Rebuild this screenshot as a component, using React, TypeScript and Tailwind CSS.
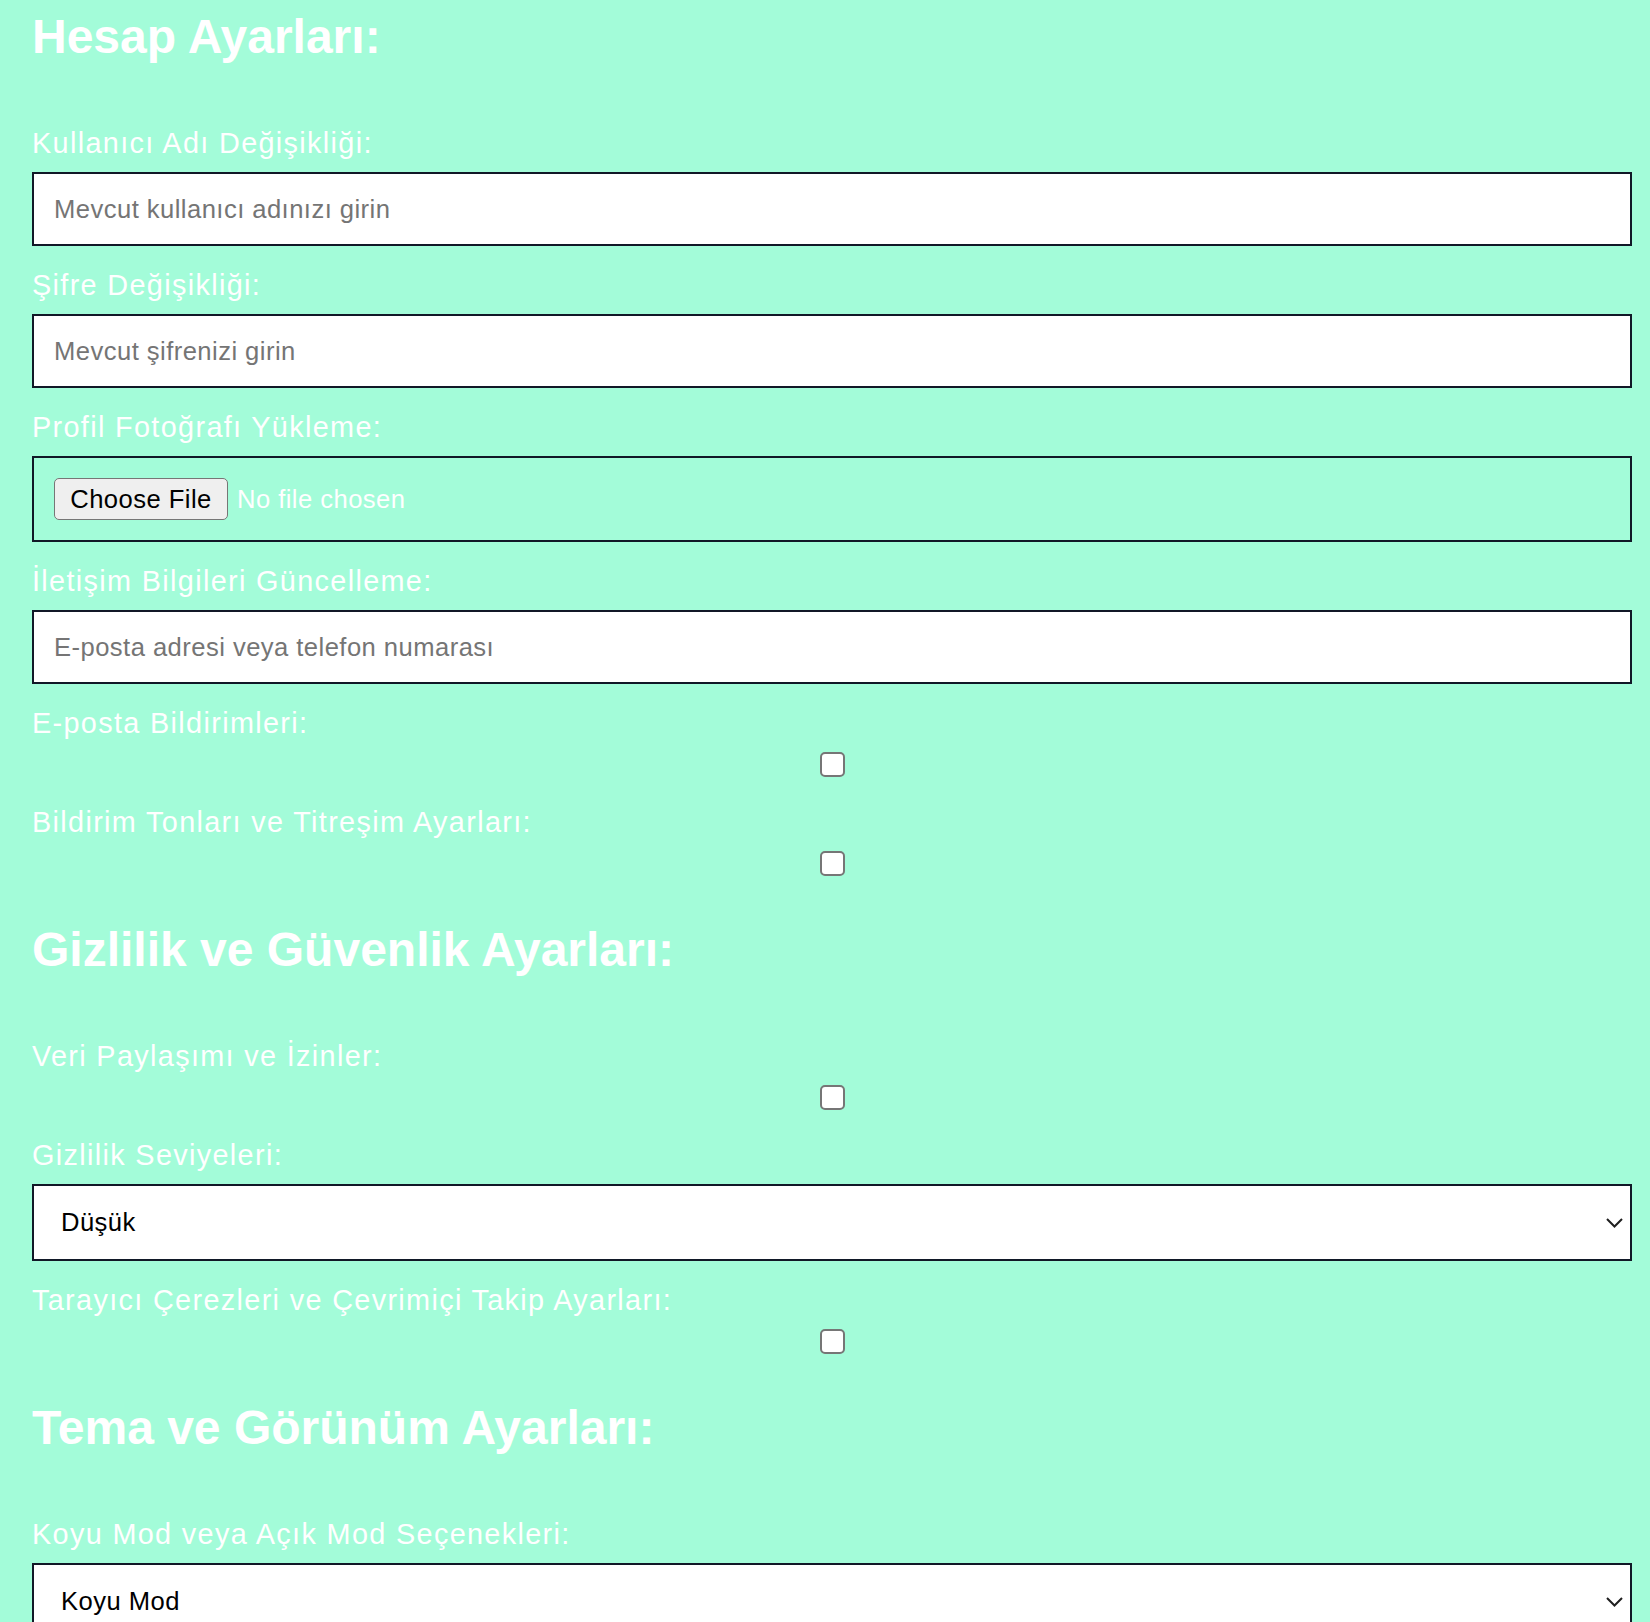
import React from "react";

function Heading({ children, first }: { children: React.ReactNode; first?: boolean }) {
  return (
    <h2
      className={`text-[48px] leading-[55px] h-[55px] font-bold text-white mb-[63px] ${first ? "" : "mt-[17px]"}`}
    >
      {children}
    </h2>
  );
}

function Label({ children }: { children: React.ReactNode }) {
  return (
    <label className="block text-[28.8px] leading-[33px] h-[33px] tracking-[1.35px] whitespace-nowrap text-white mb-[12px]">
      {children}
    </label>
  );
}

function TextInput({ placeholder }: { placeholder: string }) {
  return (
    <input
      type="text"
      placeholder={placeholder}
      className="block w-full h-[74px] border-2 border-[#111827] bg-white px-[20px] text-[25.6px] tracking-[0.45px] text-black placeholder:text-[#757575] outline-none mb-[23px]"
    />
  );
}

function Checkbox() {
  return (
    <div className="flex justify-center mb-[29px]">
      <input
        type="checkbox"
        className="appearance-none block w-[25px] h-[25px] bg-white border-2 border-[#767676] rounded-[5px]"
      />
    </div>
  );
}

function Select({ value }: { value: string }) {
  return (
    <div className="flex items-center justify-between w-full h-[77px] border-2 border-[#111827] bg-white pl-[27px] pr-[7px] mb-[23px]">
      <span className="text-[25.6px] tracking-[0.45px] text-black">{value}</span>
      <svg width="17" height="10" viewBox="0 0 17 10" fill="none">
        <polyline points="1,1 8.5,8.5 16,1" stroke="#1f1f1f" strokeWidth="2" fill="none" />
      </svg>
    </div>
  );
}

export default function App() {
  return (
    <div
      className="h-screen overflow-hidden bg-[#a3fcd9]"
      style={{ fontFamily: '"Liberation Sans", Arial, Helvetica, sans-serif' }}
    >
      <div className="flex flex-col w-[1600px] ml-[32px] pt-[9px]">
        <Heading first>Hesap Ayarları:</Heading>

        <Label>Kullanıcı Adı Değişikliği:</Label>
        <TextInput placeholder="Mevcut kullanıcı adınızı girin" />

        <Label>Şifre Değişikliği:</Label>
        <TextInput placeholder="Mevcut şifrenizi girin" />

        <Label>Profil Fotoğrafı Yükleme:</Label>
        <div className="flex items-center h-[86px] border-2 border-[#111827] px-[20px] mb-[23px]">
          <button
            type="button"
            className="flex items-center justify-center w-[174px] h-[42px] bg-[#efefef] border border-[#767676] rounded-[5px] text-[25.6px] tracking-[0.45px] text-black"
          >
            Choose File
          </button>
          <span className="ml-[9px] text-[25.6px] tracking-[0.45px] text-white">No file chosen</span>
        </div>

        <Label>İletişim Bilgileri Güncelleme:</Label>
        <TextInput placeholder="E-posta adresi veya telefon numarası" />

        <Label>E-posta Bildirimleri:</Label>
        <Checkbox />

        <Label>Bildirim Tonları ve Titreşim Ayarları:</Label>
        <Checkbox />

        <Heading>Gizlilik ve Güvenlik Ayarları:</Heading>

        <Label>Veri Paylaşımı ve İzinler:</Label>
        <Checkbox />

        <Label>Gizlilik Seviyeleri:</Label>
        <Select value="Düşük" />

        <Label>Tarayıcı Çerezleri ve Çevrimiçi Takip Ayarları:</Label>
        <Checkbox />

        <Heading>Tema ve Görünüm Ayarları:</Heading>

        <Label>Koyu Mod veya Açık Mod Seçenekleri:</Label>
        <Select value="Koyu Mod" />
      </div>
    </div>
  );
}
